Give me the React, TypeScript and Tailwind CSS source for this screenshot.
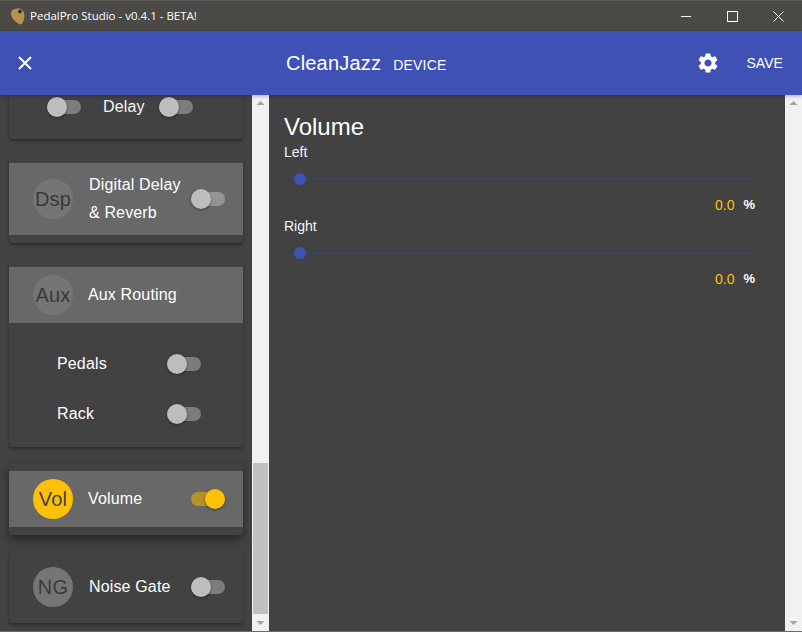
import React from "react";

function Toggle({ on = false, dim = false }: { on?: boolean; dim?: boolean }) {
  return (
    <div className="relative h-[20px] w-[34px] shrink-0">
      <div className={`absolute left-0 top-[3px] h-[14px] w-[34px] rounded-full ${on ? "bg-[#b39226]" : dim ? "bg-[#949494]" : "bg-[#7c7c7c]"}`} />
      <div className={`absolute top-0 h-[20px] w-[20px] rounded-full shadow-[0_1px_3px_rgba(0,0,0,0.4)] ${on ? "left-[14px] bg-[#ffc107]" : "left-0 bg-[#bdbdbd]"}`} />
    </div>
  );
}

function Avatar({ text, on = false }: { text: string; on?: boolean }) {
  return (
    <div className={`flex h-[40px] w-[40px] shrink-0 items-center justify-center rounded-full text-[20px] ${on ? "bg-[#ffc107] text-[#424242]" : "bg-[#757575] text-[#3a3a3a]"}`}>
      {text}
    </div>
  );
}

function Card({ children, className = "" }: { children: React.ReactNode; className?: string }) {
  return <div className={`w-[234px] rounded-[4px] bg-[#424242] ${className}`}>{children}</div>;
}

function Arrow({ up }: { up?: boolean }) {
  return (
    <svg width="17" height="17" viewBox="0 0 17 17" className="shrink-0">
      <path d={up ? "M8.5 6 L12.5 10 L4.5 10 Z" : "M8.5 11 L12.5 7 L4.5 7 Z"} fill="#a3a3a3" />
    </svg>
  );
}

function Scrollbar({ thumb }: { thumb?: boolean }) {
  return (
    <div className="flex h-full w-[17px] shrink-0 flex-col items-center bg-[#f1f1f1]">
      <Arrow up />
      <div className="flex w-full flex-1 flex-col justify-end px-px">
        {thumb && <div className="h-[151px] w-full bg-[#c1c1c1]" />}
      </div>
      <Arrow />
    </div>
  );
}

function Slider({ label }: { label: string }) {
  return (
    <div>
      <div className="h-[16px] text-[14px] leading-[16px] text-[#f5f5f5]">{label}</div>
      <div className="mt-[13px] flex h-[12px] items-center pl-[10px] pr-[33px]">
        <div className="h-[12px] w-[12px] shrink-0 rounded-full bg-[#3f51b5]" />
        <div className="h-[2px] flex-1 bg-[#3f4361]" />
      </div>
      <div className="mt-[12px] flex h-[16px] items-center justify-end pr-[30px] text-[14px] leading-[16px]">
        <span className="text-[#ffc107]">0.0</span>
        <span className="ml-[9px] text-[13px] font-bold text-white">%</span>
      </div>
    </div>
  );
}

const cardShadow = "shadow-[0_2px_3px_rgba(0,0,0,0.35)]";

export default function App() {
  return (
    <div className="flex h-[632px] w-[802px] flex-col overflow-hidden bg-[#424242] font-['Liberation_Sans',Arial,sans-serif]">
      <div className="flex h-[31px] shrink-0 items-center border-t border-t-[#5e5d5a] bg-[#4b4a47] pl-[10px]">
        <svg width="16" height="17" viewBox="0 0 16 17" className="shrink-0">
          <path d="M1.5 3 C3.5 0 10 -0.5 12.5 2 C15.5 5 14.5 11 13 14 C12 16.5 10 17 8 15.5 C5 13.5 -1 8 1.5 3 Z" fill="#b7924f" />
          <circle cx="10" cy="3.6" r="1.8" fill="#222" />
        </svg>
        <span className="ml-[4px] font-['Open_Sans',sans-serif] text-[11.5px] text-white">PedalPro Studio - v0.4.1 - BETA!</span>
        <div className="ml-auto flex h-full pr-px">
          <div className="flex w-[46px] items-center justify-center">
            <div className="h-px w-[10px] bg-white" />
          </div>
          <div className="flex w-[46px] items-center justify-center">
            <div className="h-[11px] w-[11px] border border-white" />
          </div>
          <div className="flex w-[46px] items-center justify-center">
            <svg width="11" height="11" viewBox="0 0 11 11"><path d="M0.5 0.5 L10.5 10.5 M10.5 0.5 L0.5 10.5" stroke="#fff" strokeWidth="1" fill="none" /></svg>
          </div>
        </div>
      </div>

      <div className="relative z-10 flex h-[64px] shrink-0 items-center bg-[#3f51b5] shadow-[0_1px_4px_rgba(0,0,0,0.3)]">
        <svg width="14" height="14" viewBox="0 0 14 14" className="ml-[18px] shrink-0">
          <path d="M1 1 L13 13 M13 1 L1 13" stroke="#fff" strokeWidth="2" fill="none" />
        </svg>
        <div className="ml-[254px] flex items-baseline">
          <span className="text-[20px] tracking-[0.2px] text-white">CleanJazz</span>
          <span className="ml-[12px] text-[14px] tracking-[0.2px] text-white">DEVICE</span>
        </div>
        <svg width="24" height="24" viewBox="0 0 24 24" className="ml-[249px] shrink-0" fill="#fff">
          <path d="M19.14 12.94c.04-.3.06-.61.06-.94 0-.32-.02-.64-.07-.94l2.03-1.58a.49.49 0 0 0 .12-.61l-1.92-3.32a.488.488 0 0 0-.59-.22l-2.39.96c-.5-.38-1.03-.7-1.62-.94l-.36-2.54a.484.484 0 0 0-.48-.41h-3.84c-.24 0-.43.17-.47.41l-.36 2.54c-.59.24-1.13.57-1.62.94l-2.39-.96c-.22-.08-.47 0-.59.22L2.74 8.87c-.12.21-.08.47.12.61l2.03 1.58c-.05.3-.09.63-.09.94s.02.64.07.94l-2.03 1.58a.49.49 0 0 0-.12.61l1.92 3.32c.12.22.37.29.59.22l2.39-.96c.5.38 1.03.7 1.62.94l.36 2.54c.05.24.24.41.48.41h3.84c.24 0 .44-.17.47-.41l.36-2.54c.59-.24 1.13-.56 1.62-.94l2.39.96c.22.08.47 0 .59-.22l1.92-3.32c.12-.22.07-.47-.12-.61l-2.01-1.58zM12 15.6c-1.98 0-3.6-1.62-3.6-3.6s1.62-3.6 3.6-3.6 3.6 1.62 3.6 3.6-1.62 3.6-3.6 3.6z" />
        </svg>
        <span className="ml-[27px] text-[14px] text-white">SAVE</span>
      </div>

      <div className="flex min-h-0 flex-1 border-b border-b-[#6a6a6a] text-[16px] tracking-[0.15px]">
        <div className="flex w-[252px] shrink-0 flex-col overflow-hidden pl-[9px]">
          <Card className={`h-[44px] shrink-0 rounded-t-none ${cardShadow}`}>
            <div className="flex h-[22px] items-center pl-[38px] pt-[1px]">
              <Toggle />
              <span className="ml-[22px] mt-[1px] w-[56px] text-[#f5f5f5]">Delay</span>
              <Toggle />
            </div>
          </Card>

          <Card className={`mt-[16px] h-[88px] shrink-0 pt-[8px] ${cardShadow}`}>
            <div className="flex h-[72px] items-center bg-[#686868] pl-[24px] pr-[18px]">
              <Avatar text="Dsp" />
              <div className="ml-[16px] flex-1 leading-[28px] text-white">Digital Delay<br />&amp; Reverb</div>
              <Toggle dim />
            </div>
          </Card>

          <Card className={`mt-[16px] h-[188px] shrink-0 pt-[8px] ${cardShadow}`}>
            <div className="flex h-[56px] items-center bg-[#686868] pl-[24px] pr-[18px]">
              <Avatar text="Aux" />
              <div className="ml-[15px] text-white">Aux Routing</div>
            </div>
            <div className="mt-[16px] flex h-[50px] items-center pl-[48px] pr-[42px] text-white">
              <span className="flex-1">Pedals</span>
              <Toggle />
            </div>
            <div className="flex h-[50px] items-center pl-[48px] pr-[42px] text-white">
              <span className="flex-1">Rack</span>
              <Toggle />
            </div>
          </Card>

          <Card className="mt-[16px] h-[72px] shrink-0 pt-[8px] shadow-[0_4px_10px_rgba(0,0,0,0.45)]">
            <div className="flex h-[56px] items-center bg-[#686868] pl-[24px] pr-[18px]">
              <Avatar text="Vol" on />
              <div className="ml-[15px] flex-1 text-white">Volume</div>
              <Toggle on />
            </div>
          </Card>

          <Card className={`mt-[16px] h-[72px] shrink-0 ${cardShadow}`}>
            <div className="flex h-full items-center pl-[24px] pr-[18px]">
              <Avatar text="NG" />
              <div className="ml-[16px] flex-1 text-white">Noise Gate</div>
              <Toggle />
            </div>
          </Card>
        </div>

        <Scrollbar thumb />

        <div className="w-[516px] shrink-0 pl-[15px] pt-[19px] tracking-normal">
          <div className="h-[28px] text-[24px] leading-[26px] text-white">Volume</div>
          <div className="flex flex-col gap-[5px] pt-[2px]">
            <Slider label="Left" />
            <Slider label="Right" />
          </div>
        </div>

        <Scrollbar />
      </div>
    </div>
  );
}
